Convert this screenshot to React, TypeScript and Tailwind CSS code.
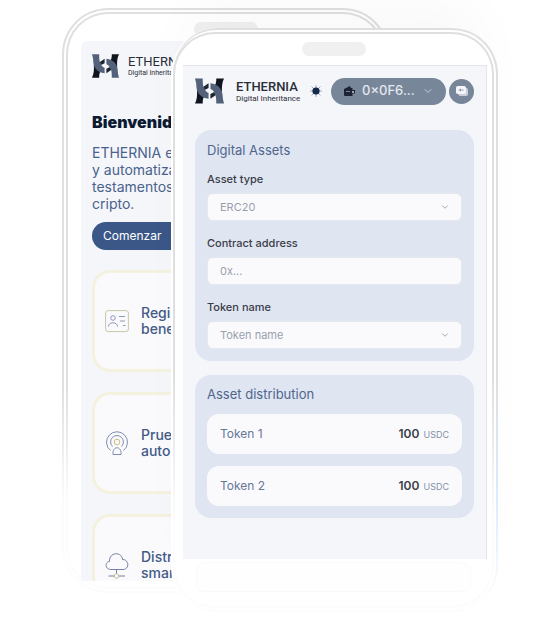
import React from "react";
import { ArrowRight, ChevronDown } from "lucide-react";

function Notch() {
  return <div className="mx-auto mt-2 h-3.5 w-16 shrink-0 rounded-full bg-[#f0f0f0]" />;
}

function LogoMark({ className }: { className: string }) {
  const half = (
    <>
      <path d="M0 26c2-4 2.500-9 2-14l8 6c-2 3-2 5-2 8z" fill="#10151f" />
      <path d="M8 9l6-4v5l-4 2z" fill="#1d2430" />
      <path d="M0 0h8c0 5 0 8 2 11 1 3 4 4 4 4v6C6 20 2 15 1.500 9 1.500 6 1 3 0 0z" fill="#53617a" />
    </>
  );
  return (
    <svg viewBox="0 0 30 26" className={className} aria-hidden="true">
      {half}
      <g transform="rotate(180 15 13)">{half}</g>
    </svg>
  );
}

function Brand({ small, name, tagline }: { small?: boolean; name: string; tagline: string }) {
  return (
    <div className={`flex items-center ${small ? "gap-[9px]" : "gap-3"}`}>
      <LogoMark className={small ? "h-6 w-[27px] shrink-0" : "h-[26px] w-[29px] shrink-0"} />
      <div className="font-[Roboto,sans-serif] whitespace-nowrap text-[#2b2e38]">
        <div className={small ? "text-[13px] leading-[14px]" : "text-[13px] leading-[14px] font-medium"}>{name}</div>
        <div className={small ? "text-[7px] leading-[9px]" : "text-[8px] leading-[9px]"}>{tagline}</div>
      </div>
    </div>
  );
}

function IdCard() {
  return (
    <svg viewBox="0 0 24 24" className="size-6 shrink-0" fill="none" strokeWidth="0.8" aria-hidden="true">
      <rect x="0.6" y="1.6" width="22.8" height="21" rx="2.5" stroke="#bdb98f" />
      <g stroke="#7180a8">
        <circle cx="8" cy="9" r="2.3" />
        <path d="M3.5 17.5c0-5 9-5 9 0M14 7.5h6M15 12h5M18 16.5h2.5" />
      </g>
    </svg>
  );
}

function Beacon() {
  return (
    <svg viewBox="0 0 24 26" className="h-[26px] w-6 shrink-0" fill="none" stroke="#7180a8" strokeWidth="0.9" aria-hidden="true">
      <path d="M5.5 20.5a10.5 10.5 0 1 1 13 0M7.5 16.5a6.4 6.4 0 1 1 9 0" />
      <circle cx="12" cy="12" r="2.8" stroke="#c2b56e" />
      <path d="M8 24.5c-1-9 9-9 8 0z" />
    </svg>
  );
}

function Cloud() {
  return (
    <svg viewBox="0 0 24 28" className="h-7 w-6 shrink-0" fill="none" stroke="#66739a" strokeWidth="0.9" aria-hidden="true">
      <path d="M6 18.5C0 18.5-.5 11 4.500 10.500 4 .5 17 .5 17.500 8.500 24.500 8.500 24.500 18.500 18 18.500zM11.500 18.500v4" />
      <path d="M3.500 25h6M14 25h6" />
      <circle cx="11.500" cy="25" r="2.300" stroke="#bdb98f" />
    </svg>
  );
}

function Feature({ icon, lines }: { icon: React.ReactNode; lines: [string, string] }) {
  return (
    <article className="flex h-[102px] shrink-0 items-center gap-3 rounded-[18px] border-3 border-[#f5f1df] bg-[#fafafd] pl-2.5">
      {icon}
      <h2 className="text-sm leading-4 font-medium text-[#435b86]">
        {lines[0]}
        <br />
        {lines[1]}
      </h2>
    </article>
  );
}

function WelcomePhone() {
  return (
    <div className="col-start-1 row-start-1 w-3/4 rounded-[46px] bg-linear-to-b from-[#dfdfdf] from-65% to-[#fcfcfc] to-85% p-0.5">
      <div className="rounded-[44px] bg-white p-0.5">
        <div className="rounded-[42px] bg-linear-to-b from-[#dfdfdf] from-65% to-[#fcfcfc] to-85% p-0.5">
          <div className="flex flex-col rounded-[40px] bg-white pb-1.5">
            <Notch />
            <main className="mx-[13px] mt-[5px] flex h-[540px] flex-col overflow-hidden rounded-t-md bg-[#f4f6fa] px-[11px] pt-[13px]">
              <Brand small name="ETHERN" tagline="Digital Inherita" />
              <h1 className="mt-[34px] text-base leading-5 font-black text-[#0c1a33]">Bienvenid</h1>
              <p className="mt-3 text-sm leading-[17px] whitespace-nowrap text-[#4a628c]">
                ETHERNIA e
                <br />y automatiza
                <br />
                testamentos
                <br />
                cripto.
              </p>
              <button type="button" className="mt-2.5 flex h-7 w-28 shrink-0 items-center gap-2 rounded-full bg-[#3a5787] pl-[11px] text-xs text-white">
                Comenzar
                <ArrowRight className="size-3 shrink-0" />
              </button>
              <div className="mt-5 flex flex-col gap-5">
                <Feature icon={<IdCard />} lines={["Regis", "bene"]} />
                <Feature icon={<Beacon />} lines={["Prue", "auto"]} />
                <Feature icon={<Cloud />} lines={["Distr", "smar"]} />
              </div>
            </main>
          </div>
        </div>
      </div>
    </div>
  );
}

const fieldBox =
  "h-7 w-full appearance-none rounded-md border border-[#e6e8f0] bg-[#fafafd] px-3 text-[11px] text-[#9a9fac] outline-none placeholder:text-[#9a9fac]";
const fieldLabel = "mb-1.5 block text-[11px] leading-4 font-medium text-[#3a3d48]";

function SelectField({ id, label, value }: { id: string; label: string; value: string }) {
  return (
    <div>
      <label htmlFor={id} className={fieldLabel}>{label}</label>
      <div className="grid items-center">
        <select id={id} className={`col-start-1 row-start-1 ${fieldBox}`}>
          <option>{value}</option>
        </select>
        <ChevronDown className="pointer-events-none col-start-1 row-start-1 mr-3 size-2.5 justify-self-end text-[#9398a8]" />
      </div>
    </div>
  );
}

function TokenRow({ name }: { name: string }) {
  return (
    <li className="flex h-10 items-center justify-between rounded-xl bg-[#fafafd] px-[13px]">
      <span className="text-xs text-[#687795]">{name}</span>
      <span className="flex items-baseline gap-1">
        <strong className="text-xs font-semibold text-[#3b3e49]">100</strong>
        <span className="text-[9px] text-[#8590a8]">USDC</span>
      </span>
    </li>
  );
}

function SunIcon() {
  return (
    <svg viewBox="0 0 14 14" className="size-3.5 shrink-0" aria-hidden="true">
      <path d="M7 1v12M1 7h12M2.500 2.500l9 9M11.500 2.500l-9 9" stroke="#8fa3bd" strokeWidth="0.9" />
      <circle cx="7" cy="7" r="3.600" fill="#14284a" />
    </svg>
  );
}

function WalletIcon() {
  return (
    <svg viewBox="0 0 12 12" className="size-3 shrink-0" aria-hidden="true">
      <path d="M1 4l6-3 1 2h1.500v2H12v3.500H9.500V11H2a1 1 0 0 1-1-1z" fill="#1c2433" />
      <path d="M3 6.500h4" stroke="#8d98ab" strokeWidth="0.8" />
      <circle cx="10" cy="7" r="0.900" fill="#dce2ec" />
    </svg>
  );
}

function CardsIcon() {
  return (
    <svg viewBox="0 0 14 12" className="h-3 w-3.5" aria-hidden="true">
      <rect x="3.500" y="3" width="9.500" height="8" rx="1.800" fill="#c9d0dc" />
      <rect x="1" y="1" width="10" height="8" rx="1.800" fill="#f3f5f9" />
      <path d="M3.500 5h2M6.500 5h2M5.500 3.700v2.600" stroke="#7b889c" strokeWidth="0.900" />
    </svg>
  );
}

function AssetsPhone() {
  return (
    <div className="z-10 col-start-1 row-start-1 mt-5 w-3/4 justify-self-end rounded-[46px] border-l-2 border-white bg-linear-to-b from-[#dfdfdf] from-60% via-[#d9ebff] via-80% to-[#fdfdfd] to-98% py-0.5 pr-0.5 shadow-[0_-40px_60px_-20px_rgba(0,0,0,0.03)]">
      <div className="rounded-[44px] bg-white py-0.5 pr-0.5">
        <div className="rounded-[42px] bg-linear-to-b from-[#dfdfdf] from-60% to-[#fcfcfc] to-85% p-0.5">
          <div className="flex flex-col rounded-[40px] bg-white pb-3.5">
            <Notch />
            <main className="mt-[9px] mr-[5px] ml-2 border-t border-r border-[#e2e4ea] bg-[#f4f6fa] px-3 pb-[41px]">
              <header className="flex h-[50px] items-center">
                <Brand name="ETHERNIA" tagline="Digital Inheritance" />
                <button type="button" aria-label="Theme" className="ml-auto">
                  <SunIcon />
                </button>
                <button type="button" className="ml-2 flex h-[27px] w-[115px] shrink-0 items-center rounded-full bg-[#788699] px-3 text-[13px] font-medium text-[#e4e8ef]">
                  <WalletIcon />
                  <span className="ml-[7px]">0×0F6...</span>
                  <ChevronDown className="ml-auto size-3 shrink-0 text-[#c5ccd8]" />
                </button>
                <button type="button" aria-label="Accounts" className="ml-[3px] flex size-[25px] shrink-0 items-center justify-center rounded-full bg-[#788699]">
                  <CardsIcon />
                </button>
              </header>
              <section className="mt-3.5 rounded-2xl bg-[#dfe5f1] px-3 pt-2.5 pb-3">
                <h2 className="text-[13px] leading-5 text-[#4f658e]">Digital Assets</h2>
                <form className="mt-[11px] flex flex-col gap-3.5">
                  <SelectField id="asset-type" label="Asset type" value="ERC20" />
                  <div>
                    <label htmlFor="contract" className={fieldLabel}>Contract address</label>
                    <input id="contract" type="text" placeholder="0x..." className={`block ${fieldBox}`} />
                  </div>
                  <SelectField id="token-name" label="Token name" value="Token name" />
                </form>
              </section>
              <section className="mt-3.5 rounded-2xl bg-[#dfe5f1] px-3 pt-[9px] pb-3">
                <h2 className="text-[13px] leading-5 text-[#4f658e]">Asset distribution</h2>
                <ul className="mt-2.5 flex flex-col gap-3">
                  <TokenRow name="Token 1" />
                  <TokenRow name="Token 2" />
                </ul>
              </section>
            </main>
            <div className="mx-[21px] mt-[3px] h-[30px] rounded-lg border border-[#fafafa] bg-[#fefefe]" />
          </div>
        </div>
      </div>
    </div>
  );
}

export default function App() {
  return (
    <div className="overflow-hidden bg-white pb-2 font-[Inter,sans-serif]">
      <div className="mx-auto grid w-full max-w-[436px] items-start pt-2">
        <WelcomePhone />
        <AssetsPhone />
      </div>
    </div>
  );
}
